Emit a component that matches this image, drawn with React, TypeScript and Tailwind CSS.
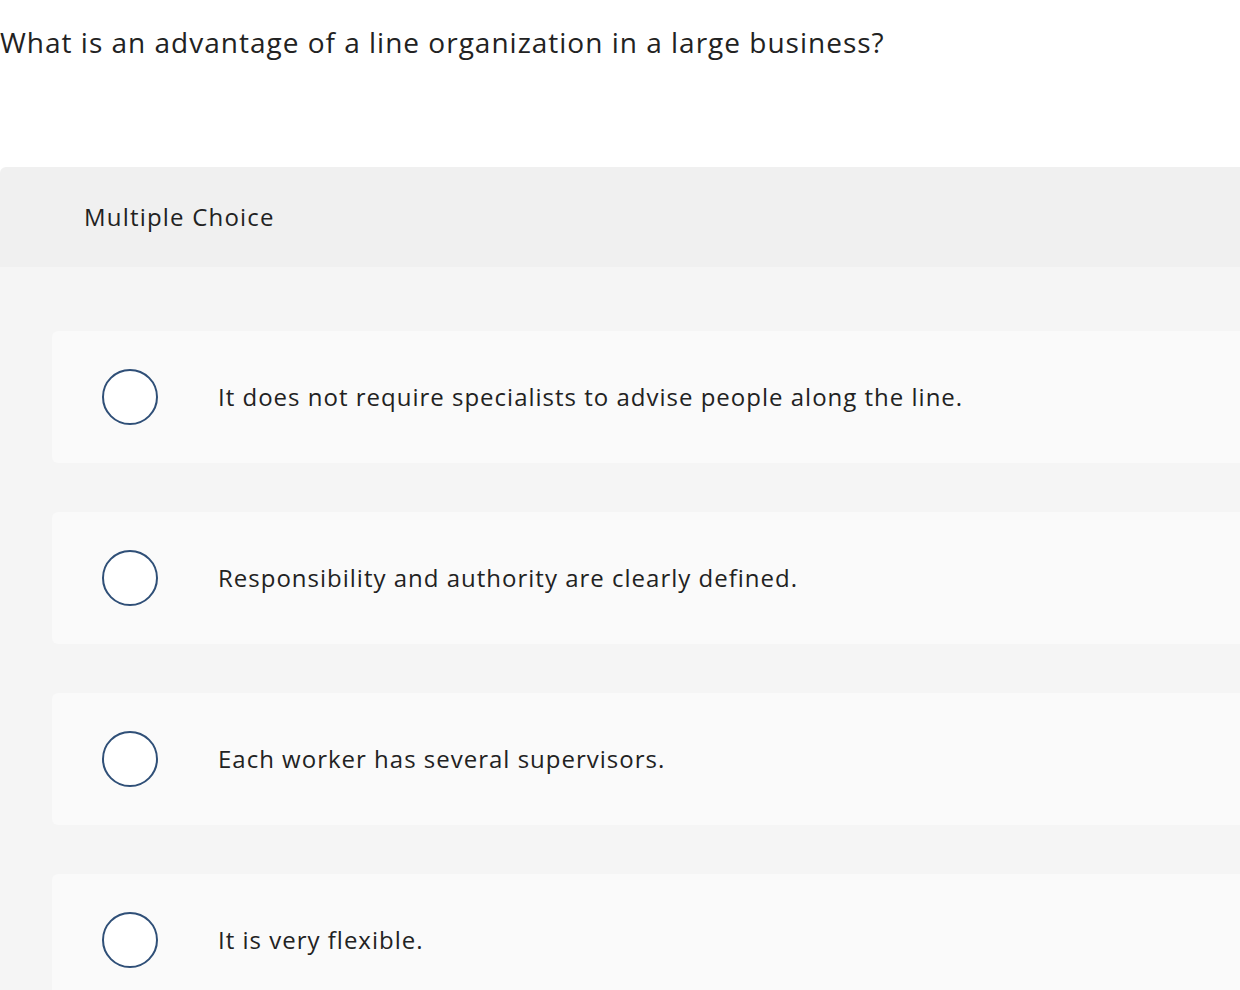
const options = [
  "It does not require specialists to advise people along the line.",
  "Responsibility and authority are clearly defined.",
  "Each worker has several supervisors.",
  "It is very flexible.",
];

export default function App() {
  return (
    <div className="w-[1240px] h-[990px] overflow-hidden bg-white text-[#222] font-['Open_Sans','Noto_Sans',sans-serif]">
      <h1 className="pt-[22px] text-[28px] leading-[40px] tracking-[1px]">
        What is an advantage of a line organization in a large business?
      </h1>

      <div className="mt-[105px]">
        <div className="h-[100px] rounded-tl-[6px] bg-[#f0f0f0] pl-[84px] flex items-center">
          <span className="text-[24px] tracking-[1.2px]">Multiple Choice</span>
        </div>

        <div className="bg-[#f5f5f5] pl-[52px] pt-[64px] pb-[40px] flex flex-col gap-[49px]">
          {options.map((text) => (
            <div
              key={text}
              className="-mr-[20px] h-[132px] rounded-[6px] bg-[#fafafa] flex items-center"
            >
              <div className="ml-[50px] w-[56px] h-[56px] rounded-full border-2 border-[#2f4f77] bg-white shrink-0" />
              <span className="ml-[60px] text-[24px] tracking-[1px]">{text}</span>
            </div>
          ))}
        </div>
      </div>
    </div>
  );
}
